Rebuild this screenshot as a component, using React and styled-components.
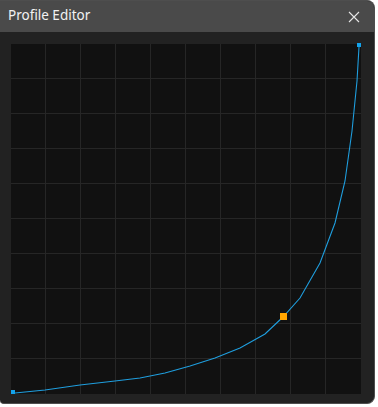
import React from "react";
import styled, { createGlobalStyle } from "styled-components";

const Global = createGlobalStyle`
  html, body {
    margin: 0;
    padding: 0;
    background: #ffffff;
  }
`;

const Window = styled.div`
  width: 375px;
  height: 404px;
  box-sizing: border-box;
  background: #222222;
  border: 1px solid #4e4e4e;
  border-left: none;
  border-radius: 0 8px 8px 4px;
  overflow: hidden;
  display: flex;
  flex-direction: column;
  font-family: "Noto Sans", "Open Sans", sans-serif;
`;

const TitleBar = styled.div`
  height: 31px;
  flex-shrink: 0;
  background: #4a4a4a;
  display: flex;
  align-items: center;
  justify-content: space-between;
  padding: 0 8px 0 8px;
  color: #f2f2f2;
`;

const Title = styled.span`
  font-size: 13.5px;
  letter-spacing: 0;
  line-height: 1;
  margin-top: -1px;
`;

const CloseButton = styled.button`
  width: 20px;
  height: 20px;
  padding: 0;
  border: none;
  background: transparent;
  display: flex;
  align-items: center;
  justify-content: center;
  margin-right: 2px;
  cursor: pointer;
`;

const Body = styled.div`
  flex: 1;
  padding: 12px 0 0 11px;
`;

const Plot = styled.svg`
  display: block;
  overflow: visible;
`;

const SIZE = 350;
const STEP = 35;

const curve = [
  [4, 349], [34, 346], [69, 341], [104, 337], [129, 334], [154, 329],
  [179, 322], [204, 314], [229, 304], [254, 290], [272, 273], [289, 254],
  [309, 219], [324, 179], [334, 137], [341, 87], [346, 37], [348, 3],
];

const ProfileEditor = () => {
  const lines = [];
  for (let i = 1; i < SIZE / STEP; i++) lines.push(i * STEP - 0.5);

  return (
    <Window>
      <TitleBar>
        <Title>Profile Editor</Title>
        <CloseButton aria-label="Close">
          <svg width="12" height="12" viewBox="0 0 12 12">
            <path d="M1 1 L11 11 M11 1 L1 11" stroke="#e6e6e6" strokeWidth="1.1" />
          </svg>
        </CloseButton>
      </TitleBar>
      <Body>
        <Plot width={SIZE} height={SIZE} viewBox={`0 0 ${SIZE} ${SIZE}`}>
          <rect x="0" y="0" width={SIZE} height={SIZE} fill="#111111" />
          {lines.map((p) => (
            <g key={p}>
              <line x1={p} y1="0" x2={p} y2={SIZE} stroke="#262626" strokeWidth="1" />
              <line x1="0" y1={p} x2={SIZE} y2={p} stroke="#262626" strokeWidth="1" />
            </g>
          ))}
          <polyline
            points={curve.map((c) => c.join(",")).join(" ")}
            fill="none"
            stroke="#1f9ede"
            strokeWidth="1.1"
          />
          <rect x="0" y="346" width="4" height="4" fill="#14a3ec" />
          <rect x="346" y="-1" width="4" height="4" fill="#14a3ec" />
          <rect x="269" y="269" width="7" height="7" fill="#ffa500" />
        </Plot>
      </Body>
    </Window>
  );
};

export default function App() {
  return (
    <>
      <Global />
      <ProfileEditor />
    </>
  );
}
